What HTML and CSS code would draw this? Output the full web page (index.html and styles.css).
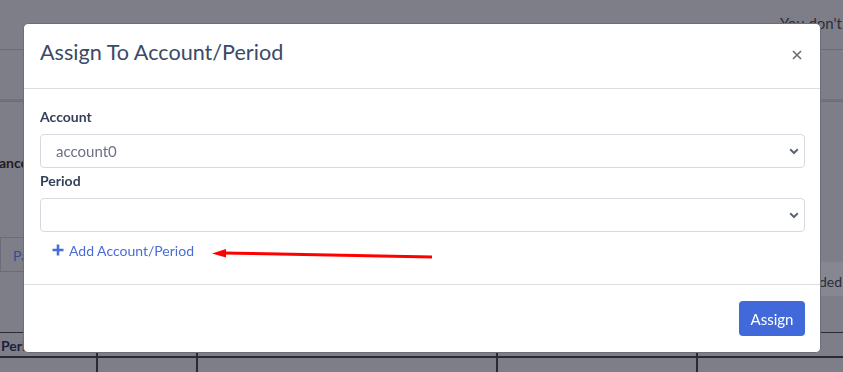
FILE: index.html
```html
<!DOCTYPE html>
<html lang="en">
<head>
<meta charset="utf-8">
<title>Assign To Account/Period</title>
<link rel="stylesheet" href="styles.css">
</head>
<body>
<div class="page">
  <header class="topbar"><span class="notice">You don't</span></header>
  <div class="subbar"></div>
  <main class="content">
    <h3 class="section-title">ance</h3>
    <div class="tools">
      <div class="tab">Pay</div>
      <div class="band"><span class="band-text">ded</span></div>
    </div>
    <div class="table">
      <div class="cell c1 head">Period</div>
      <div class="cell c2 head"></div>
      <div class="cell c3 head"></div>
      <div class="cell c4 head"></div>
      <div class="cell c5 head"></div>
      <div class="cell c1"></div>
      <div class="cell c2"></div>
      <div class="cell c3"></div>
      <div class="cell c4"></div>
      <div class="cell c5"></div>
    </div>
  </main>
</div>

<div class="modal">
  <div class="modal-header">
    <h5 class="modal-title">Assign To Account/Period</h5>
    <button class="close" type="button" aria-label="Close">
      <svg width="10" height="10" viewBox="0 0 10 10"><path d="M1 1 L9 9 M9 1 L1 9" stroke="#6f6f75" stroke-width="1.7" fill="none"/></svg>
    </button>
  </div>
  <div class="modal-body">
    <label class="label">Account</label>
    <div class="select"><span class="select-value">account0</span><svg class="chev" width="10" height="7" viewBox="0 0 10 7"><path d="M1.2 1.3 L5 5 L8.8 1.3" stroke="#5d6679" stroke-width="2" fill="none"/></svg></div>
    <label class="label">Period</label>
    <div class="select"><span class="select-value"></span><svg class="chev" width="10" height="7" viewBox="0 0 10 7"><path d="M1.2 1.3 L5 5 L8.8 1.3" stroke="#5d6679" stroke-width="2" fill="none"/></svg></div>
    <button class="add-link" type="button">
      <svg width="12" height="12" viewBox="0 0 12 12"><path d="M6 0.5 V11.5 M0.5 6 H11.5" stroke="#4a6cd6" stroke-width="2.6" fill="none"/></svg>
      <span>Add Account/Period</span>
    </button>
  </div>
  <div class="modal-footer">
    <button class="btn-primary" type="button">Assign</button>
  </div>
  <svg class="arrow" width="240" height="20" viewBox="0 0 240 20">
    <path d="M220 14 L12 10" stroke="#ff0000" stroke-width="3" fill="none"/>
    <path d="M0 10.5 L14 6 L14 14.5 Z" fill="#ff0000"/>
  </svg>
</div>
</body>
</html>
```

FILE: styles.css
```css
* { box-sizing: border-box; }
html, body { margin: 0; padding: 0; }
body {
  font-family: Lato, "Liberation Sans", sans-serif;
  font-size: 14px;
  line-height: 1.5;
  background: #7e7e88;
  overflow: hidden;
}
.page {
  width: 843px;
  height: 372px;
  overflow: hidden;
  background: #7e7e88;
  color: #26262f;
}
.topbar {
  height: 50px;
  border-bottom: 1px solid #6c6c76;
  padding: 12px 0 0 780px;
  white-space: nowrap;
}
.notice { color: #2c2c38; font-size: 15px; }
.subbar {
  height: 52px;
  border-bottom: 1px solid #6c6c76;
  box-shadow: 0 -2px 0 #72727c inset;
}
.content { padding: 0; }
.section-title {
  margin: 50px 0 0 -1px;
  font-size: 14px;
  font-weight: 700;
  line-height: 21px;
  color: #1c1c28;
  white-space: nowrap;
}
.tools {
  display: flex;
  align-items: flex-start;
  margin-top: 64px;
}
.tab {
  width: 220px;
  height: 35px;
  border: 1px solid #6c6c76;
  padding: 7px 0 0 12px;
  color: #3b4b8c;
  font-size: 14px;
  flex: none;
}
.band {
  flex: 1;
  height: 34px;
  margin-top: 25px;
  background: #878791;
  padding: 9px 0 0 599px;
  white-space: nowrap;
  font-size: 14px;
  color: #2c2c38;
}
.table {
  display: grid;
  grid-template-columns: 98px 100px 300px 200px 145px;
  margin-top: 36px;
  border-top: 1px solid #2a2a34;
}
.cell {
  height: 25px;
  border-right: 2px solid #2a2a34;
  border-bottom: 2px solid #2a2a34;
  font-weight: 700;
  color: #1e1e3c;
  padding: 2px 0 0 1px;
  white-space: nowrap;
}
.cell.c5 { border-right: none; }

/* modal */
.modal {
  position: fixed;
  left: 23px;
  top: 23px;
  width: 798px;
  height: 330px;
  background: #fff;
  border: 1px solid #6e6e78;
  border-radius: 5px;
  display: flex;
  flex-direction: column;
}
.modal-header {
  display: flex;
  align-items: center;
  height: 65px;
  padding: 0 18px 8px 16px;
  border-bottom: 1px solid #dcdde3;
}
.modal-title {
  margin: 0;
  font-size: 21.6px;
  font-weight: 400;
  line-height: 30px;
  color: #3a4a68;
}
.close {
  margin-left: auto;
  margin-top: 5px;
  background: none;
  border: none;
  padding: 0;
  width: 10px;
  height: 10px;
  display: flex;
}
.modal-body {
  padding: 17px 16px 17px 16px;
  display: flex;
  flex-direction: column;
  align-items: flex-start;
}
.label {
  font-weight: 700;
  color: #353f59;
  line-height: 21px;
  margin-bottom: 7px;
  font-size: 14px;
}
.label + .select { margin-bottom: 2px; }
.select {
  width: 765px;
  height: 34px;
  border: 1px solid #d7d9e0;
  border-radius: 4px;
  display: flex;
  align-items: center;
  padding: 0 5px 0 15px;
}
.select-value { color: #6b7282; font-size: 15px; flex: 1; }
.chev { flex: none; }
.add-link {
  margin-top: -1px;
  height: 34px;
  background: none;
  border: 1px solid transparent;
  padding: 0 11px;
  display: flex;
  align-items: center;
  gap: 5px;
  font-family: inherit;
  font-size: 14px;
  color: #4a6cd6;
}
.modal-footer {
  border-top: 1px solid #dcdde3;
  flex: 1;
  display: flex;
  justify-content: flex-end;
  align-items: flex-start;
  padding: 16px 15px 0 16px;
}
.btn-primary {
  width: 66px;
  height: 35px;
  background: #4169d9;
  border: none;
  border-radius: 4px;
  color: #fff;
  font-family: inherit;
  font-size: 15px;
}
.arrow {
  position: absolute;
  left: 188px;
  top: 219px;
}
```
